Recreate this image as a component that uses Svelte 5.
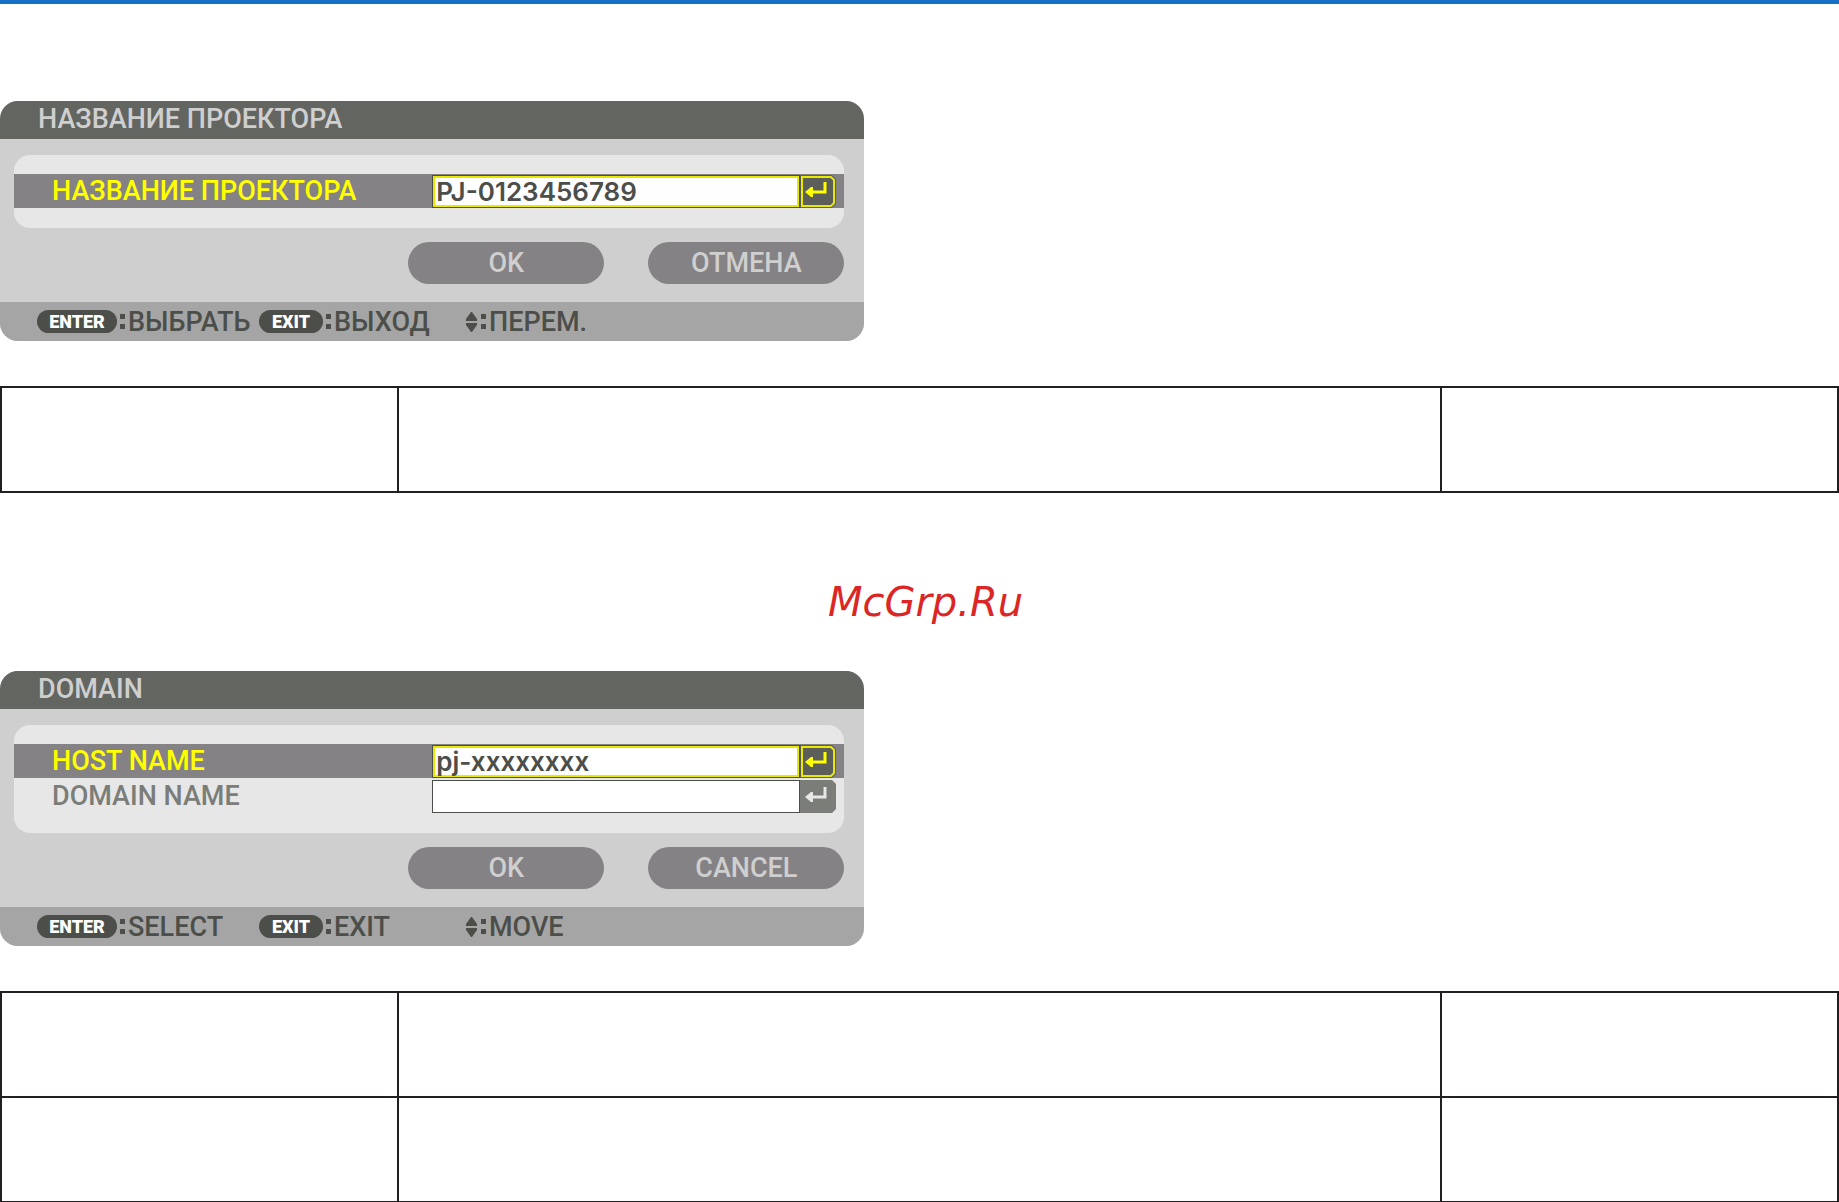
<script>
    const dialogs = [
        {
            id: 'projector',
            title: 'НАЗВАНИЕ ПРОЕКТОРА',
            fields: [
                { label: 'НАЗВАНИЕ ПРОЕКТОРА', value: 'PJ-0123456789', selected: true }
            ],
            actions: ['OK', 'ОТМЕНА'],
            hints: { enter: 'ВЫБРАТЬ', exit: 'ВЫХОД', move: 'ПЕРЕМ.' },
            rows: 1
        },
        {
            id: 'domain',
            title: 'DOMAIN',
            fields: [
                { label: 'HOST NAME', value: 'pj-xxxxxxxx', selected: true },
                { label: 'DOMAIN NAME', value: '', selected: false }
            ],
            actions: ['OK', 'CANCEL'],
            hints: { enter: 'SELECT', exit: 'EXIT', move: 'MOVE' },
            rows: 2
        }
    ];
</script>

<main>
    {#each dialogs as dialog, index}
        {#if index > 0}
            <p class="watermark">McGrp.Ru</p>
        {/if}

        <section class="dialog" aria-labelledby="{dialog.id}-title">
            <h2 id="{dialog.id}-title">{dialog.title}</h2>

            <form class="body" onsubmit={(e) => e.preventDefault()}>
                <div class="panel">
                    {#each dialog.fields as field, i}
                        <div class="row" class:selected={field.selected}>
                            <label for="{dialog.id}-{i}">{field.label}</label>
                            <input id="{dialog.id}-{i}" type="text" bind:value={field.value} spellcheck="false" />
                            <button type="button" class="edit" aria-label={field.label}>
                                <svg viewBox="0 0 36 33" width="36" height="33" aria-hidden="true">
                                    <path class="shape" d="M0 0H32L36 4V29L32 33H0Z" />
                                    {#if field.selected}
                                        <path class="frame" d="M2 2H31L34 5V28L31 31H2Z" />
                                    {/if}
                                    <path class="arrow" d="M25 7V17H12" />
                                    <path class="head" d="M5 17L11 12H13V22H11Z" />
                                </svg>
                            </button>
                        </div>
                    {/each}
                </div>

                <div class="actions">
                    {#each dialog.actions as action}
                        <button type="button">{action}</button>
                    {/each}
                </div>
            </form>

            <footer>
                <span class="hint"><kbd class="enter">ENTER</kbd><i class="colon"></i>{dialog.hints.enter}</span>
                <span class="hint"><kbd class="exit">EXIT</kbd><i class="colon"></i>{dialog.hints.exit}</span>
                <span class="hint">
                    <svg viewBox="0 0 13 20" width="13" height="20" aria-hidden="true">
                        <path d="M6 0H7L12 7V9H1V7ZM1 11H12V13L7 20H6L1 13Z" />
                    </svg><i class="colon"></i>{dialog.hints.move}
                </span>
            </footer>
        </section>

        <table>
            <colgroup>
                <col class="side" />
                <col />
                <col class="side" />
            </colgroup>
            <tbody>
                {#each Array(dialog.rows) as _}
                    <tr><td></td><td></td><td></td></tr>
                {/each}
            </tbody>
        </table>
    {/each}
</main>

<style>
    :global(body) {
        background: #fff;
    }

    main {
        border-top: 4px solid #1670c4;
        padding-top: 97px;
        font-family: Roboto, "Liberation Sans", sans-serif;
        font-size: 27px;
        font-weight: 500;
        line-height: 32px;
    }

    .dialog {
        display: flex;
        flex-direction: column;
        width: 47%;
        min-width: 800px;
        background: #cfcfcf;
        border-radius: 18px;
        overflow: hidden;
    }

    h2 {
        margin: 0;
        padding: 2px 38px 4px;
        background: #636561;
        color: #cfcfcf;
        font-size: inherit;
        font-weight: inherit;
    }

    .body {
        display: flex;
        flex-direction: column;
        gap: 14px;
        padding: 16px 20px 18px 14px;
    }

    .panel {
        display: flex;
        flex-direction: column;
        gap: 1px;
        padding: 19px 0 20px;
        background: #e7e7e7;
        border-radius: 16px;
    }

    .row {
        display: grid;
        grid-template-columns: 1fr 368px 36px;
        align-items: center;
        height: 34px;
        padding: 0 8px 0 38px;
        color: #7b7d79;
    }

    .row.selected {
        background: #848284;
        color: #ff0;
    }

    input {
        box-sizing: border-box;
        width: 100%;
        height: 33px;
        margin: 0;
        padding: 0 3px;
        border: 1px solid #4c4e4a;
        border-radius: 0;
        outline: none;
        background: #fff;
        color: #4c4e4a;
        font-family: Inter, sans-serif;
        font-size: 26px;
        font-weight: 600;
    }

    .selected input {
        box-shadow: inset 0 0 0 2px #e8e800;
    }

    button {
        margin: 0;
        padding: 0;
        border: 0;
        background: none;
        font: inherit;
        cursor: pointer;
    }

    .edit svg {
        display: block;
    }

    .shape {
        fill: #7b7d79;
    }

    .arrow {
        fill: none;
        stroke: #e7e7e7;
        stroke-width: 3;
    }

    .head {
        fill: #e7e7e7;
    }

    .selected .shape {
        fill: #5c5e5a;
    }

    .frame {
        fill: none;
        stroke: #e8e800;
        stroke-width: 2;
    }

    .selected .arrow {
        stroke: #ff0;
    }

    .selected .head {
        fill: #ff0;
    }

    .actions {
        display: flex;
        justify-content: flex-end;
        gap: 44px;
    }

    .actions button {
        width: 196px;
        height: 42px;
        border-radius: 21px;
        background: #848284;
        color: #cfcfcf;
    }

    footer {
        display: grid;
        grid-template-columns: 222px 206px 1fr;
        align-items: center;
        height: 39px;
        padding-left: 37px;
        background: #a5a5a5;
        color: #4c4e4a;
    }

    .hint {
        display: flex;
        align-items: center;
        white-space: nowrap;
    }

    .hint svg {
        fill: #4c4e4a;
    }

    kbd {
        border-radius: 12px;
        background: #4c4e4a;
        color: #fff;
        font-family: inherit;
        font-size: 18px;
        font-weight: 900;
        line-height: 23px;
        text-align: center;
    }

    .enter {
        width: 80px;
    }

    .exit {
        width: 64px;
    }

    .colon {
        box-sizing: border-box;
        width: 5px;
        height: 15px;
        margin: 0 3px;
        border: solid #4c4e4a;
        border-width: 5px 0;
    }

    table {
        width: 100%;
        margin-top: 45px;
        border-collapse: collapse;
        table-layout: fixed;
    }

    .side {
        width: 21.6%;
    }

    td {
        box-sizing: border-box;
        height: 105px;
        padding: 0;
        border: 2px solid #231f20;
    }

    .watermark {
        margin: 0;
        padding: 85px 0 45px 12px;
        color: #dc2626;
        font-family: "DejaVu Sans", sans-serif;
        font-size: 40px;
        font-style: italic;
        font-weight: 400;
        line-height: 48px;
        text-align: center;
    }
</style>
